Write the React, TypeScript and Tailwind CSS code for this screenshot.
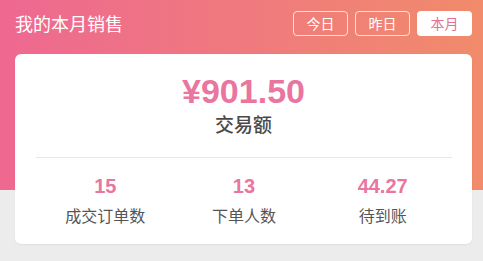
export default function App() {
  const cjk = { fontFamily: '"Noto Sans CJK SC", "Noto Sans", sans-serif' };
  const num = { fontFamily: '"Liberation Sans", Arial, sans-serif' };
  const stats = [
    { v: "15", l: "成交订单数" },
    { v: "13", l: "下单人数" },
    { v: "44.27", l: "待到账" },
  ];
  return (
    <div
      className="w-full h-[261px] bg-[#ececec] bg-[linear-gradient(to_right,#ee6891,#f18b6b)] bg-no-repeat bg-[length:100%_190px] overflow-hidden"
      style={cjk}
    >
      <div className="flex items-center justify-between pl-[15px] pr-[11px] pt-[11px] h-[36px]">
        <div className="text-white text-[18px] leading-[25px]">我的本月销售</div>
        <div className="flex gap-[7px]">
          {["今日", "昨日"].map((t) => (
            <div
              key={t}
              className="w-[55px] h-[25px] rounded-[4px] border border-[#fbe3da] text-white text-[14px] flex items-center justify-center"
            >
              {t}
            </div>
          ))}
          <div className="w-[55px] h-[25px] rounded-[4px] bg-white text-[#e56f96] text-[14px] flex items-center justify-center">
            本月
          </div>
        </div>
      </div>
      <div className="ml-[15px] mr-[11px] mt-[18px] h-[190px] bg-white rounded-[6px] shadow-[0_1px_2px_rgba(0,0,0,0.06)] flex flex-col">
        <div className="flex flex-col items-center pt-[20px]">
          <div className="text-[34px] leading-[34px] font-bold text-[#ea759f]" style={num}>
            ¥901.50
          </div>
          <div className="mt-[6px] text-[19px] leading-[20px] text-[#4a4a4a] font-medium">交易额</div>
        </div>
        <div className="ml-[21px] mr-[20px] mt-[23px] h-px bg-[#e8e8e8]" />
        <div className="grid grid-cols-3 ml-[21px] mr-[20px] pt-[18px]">
          {stats.map((s) => (
            <div key={s.l} className="flex flex-col items-center">
              <div className="text-[20px] leading-[20px] font-bold text-[#ea759f]" style={num}>
                {s.v}
              </div>
              <div className="mt-[10px] text-[16px] leading-[18px] text-[#555]">{s.l}</div>
            </div>
          ))}
        </div>
      </div>
    </div>
  );
}
